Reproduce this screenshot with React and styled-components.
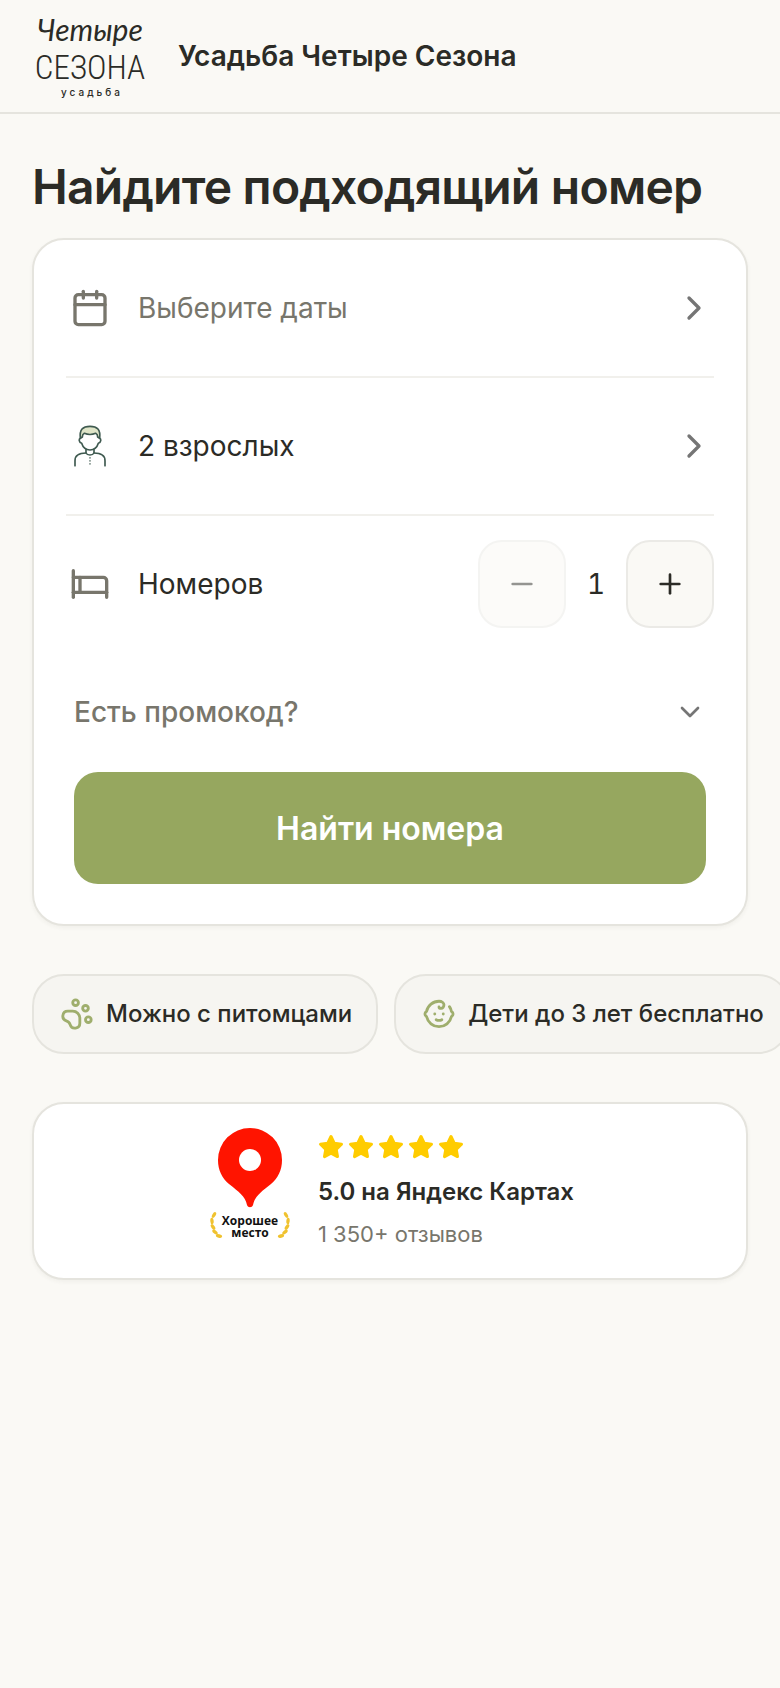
import { useState } from "react";
import styled, { createGlobalStyle } from "styled-components";
import {
  Baby,
  Bed,
  Calendar,
  ChevronDown,
  ChevronRight,
  Minus,
  PawPrint,
  Plus,
} from "lucide-react";

const GlobalStyle = createGlobalStyle`
  * {
    box-sizing: border-box;
  }
  body {
    margin: 0;
    background-color: #faf9f5;
    color: #2b2b26;
    font-family: Inter, "Liberation Sans", sans-serif;
    overflow-x: hidden;
  }
  button {
    font-family: inherit;
    color: inherit;
    cursor: pointer;
  }
`;

const Header = styled.header`
  display: flex;
  align-items: center;
  gap: 32px;
  height: 114px;
  padding: 0 32px;
  border-bottom: 2px solid #e5e4de;
`;
const LogoLink = styled.a`
  display: flex;
`;
const HotelName = styled.span`
  font-size: 28px;
  line-height: 40px;
  font-weight: 600;
`;

const Main = styled.main`
  display: flex;
  flex-direction: column;
  padding: 44px 32px;
`;
const Title = styled.h1`
  margin: 0 0 22px;
  font-size: 48px;
  line-height: 58px;
  font-weight: 600;
  letter-spacing: -0.016em;
`;

const Card = styled.section`
  background-color: white;
  border: 2px solid #e5e4de;
  border-radius: 32px;
  box-shadow: 0 2px 4px rgba(60, 60, 40, 0.05);
`;
const SearchForm = styled.form`
  padding: 0 32px 40px;
`;
const Row = styled.div`
  display: flex;
  align-items: center;
  gap: 24px;
  height: 136px;
`;
const RowButton = styled.button`
  display: flex;
  align-items: center;
  gap: 24px;
  width: 100%;
  height: 138px;
  padding: 0;
  background: none;
  border: none;
  border-bottom: 2px solid #f1f0ec;
  text-align: left;
`;
const RowIcon = styled.span`
  display: flex;
  justify-content: center;
  width: 48px;
  color: #78766c;
`;
const RowLabel = styled.span`
  flex: 1;
  font-size: 28px;
  line-height: 40px;
  color: ${(props) => (props.$muted ? "#78766c" : "#2b2b26")};
`;

const Stepper = styled.div`
  display: flex;
  align-items: center;
`;
const StepButton = styled.button`
  display: flex;
  align-items: center;
  justify-content: center;
  width: 88px;
  height: 88px;
  padding: 0;
  background-color: #faf9f5;
  border: 2px solid #ebeae6;
  border-radius: 24px;
  &:disabled {
    opacity: 0.5;
    cursor: default;
  }
`;
const Count = styled.output`
  width: 60px;
  font-size: 28px;
  line-height: 40px;
  text-align: center;
  font-variant-numeric: tabular-nums;
`;

const PromoButton = styled.button`
  display: flex;
  align-items: center;
  justify-content: space-between;
  width: 100%;
  height: 120px;
  padding: 0 8px;
  background: none;
  border: none;
  color: #78766c;
  font-size: 28px;
  line-height: 40px;
  font-weight: 500;
`;
const SubmitWrap = styled.div`
  display: flex;
  padding: 0 8px;
`;
const SubmitButton = styled.button`
  flex: 1;
  height: 112px;
  padding: 2px 0 0;
  background-color: #96a75f;
  border: none;
  border-radius: 24px;
  color: white;
  font-size: 32px;
  line-height: 40px;
  font-weight: 600;
`;

const Chips = styled.ul`
  display: flex;
  gap: 16px;
  margin: 48px -32px;
  padding: 0 32px;
  list-style: none;
  overflow-x: auto;
  scrollbar-width: none;
`;
const Chip = styled.li`
  display: flex;
  flex-shrink: 0;
  align-items: center;
  gap: 12px;
  height: 80px;
  padding: 0 24px 0 26px;
  background-color: #f6f5f1;
  border: 2px solid #e5e4de;
  border-radius: 32px;
  font-size: 24px;
  line-height: 32px;
  font-weight: 500;
  white-space: nowrap;
  svg {
    color: #9fae6d;
  }
`;

const RatingCard = styled(Card)`
  display: flex;
  align-items: center;
  justify-content: center;
  gap: 28px;
  padding: 24px 32px 24px 36px;
`;
const RatingInfo = styled.div`
  display: flex;
  flex-direction: column;
  gap: 12px;
`;
const Stars = styled.div`
  display: flex;
  gap: 4px;
  margin-bottom: 4px;
`;
const Score = styled.strong`
  font-size: 24px;
  line-height: 32px;
  font-weight: 600;
`;
const Reviews = styled.span`
  font-size: 22px;
  line-height: 28px;
  color: #78766c;
`;

const chips = [
  { id: 1, icon: PawPrint, text: "Можно с питомцами" },
  { id: 2, icon: Baby, text: "Дети до 3 лет бесплатно" },
];

// x, y, rotation of the left branch, the right one is mirrored
const leaves = [
  [4, 87, 30],
  [2, 93, -5],
  [3, 99, -35],
  [5, 104, -50],
  [9, 108, -75],
];

function Logo() {
  return (
    <svg width="114" height="96" viewBox="0 0 114 96" fill="#2b2b26">
      <text
        x="58"
        y="33"
        fontFamily="Lato, Inter, sans-serif"
        fontStyle="italic"
        fontWeight="400"
        fontSize="30"
        textAnchor="middle"
      >
        Четыре
      </text>
      <text
        x="58"
        y="71"
        fontFamily="'Roboto Condensed', 'Open Sans Condensed', 'Liberation Sans Narrow', Roboto, sans-serif"
        fontWeight="300"
        fontSize="33"
        textAnchor="middle"
      >
        СЕЗОНА
      </text>
      <text
        x="60"
        y="88"
        fontFamily="Inter, sans-serif"
        fontWeight="500"
        fontSize="10"
        letterSpacing="3"
        textAnchor="middle"
      >
        усадьба
      </text>
    </svg>
  );
}

function Person() {
  return (
    <svg
      width="48"
      height="54"
      viewBox="0 0 144 162"
      fill="none"
      stroke="#3f5a50"
      strokeWidth="5"
      strokeLinecap="round"
      strokeLinejoin="round"
    >
      <path
        d="M43 58C40 32 50 22 72 22s32 10 29 36l-6-4c0-6-2-9-6-11-10 4-24 4-34 0-4 2-6 5-6 11z"
        fill="#dfe5c8"
      />
      <path d="M43 58c-5 2-5 12 4 15 4 13 13 20 25 20s21-7 25-20c9-3 9-13 4-15" />
      <path d="M60 92v10c4 8 20 8 24 0V92" />
      <path d="M27 140v-15c0-16 12-23 33-23M117 140v-15c0-16-12-23-33-23" />
      <path d="M72 116v20" strokeWidth="4" strokeDasharray="1 8" />
    </svg>
  );
}

function Star() {
  return (
    <svg width="26" height="26" viewBox="0 0 26 26">
      <path
        d="M13 2.500l3.200 6.700 7.300 1-5.300 5.100 1.300 7.300L13 19.100l-6.500 3.500 1.300-7.300-5.300-5.100 7.300-1z"
        fill="#ffcc00"
        stroke="#ffcc00"
        strokeWidth="3"
        strokeLinejoin="round"
      />
    </svg>
  );
}

function Branch() {
  return leaves.map(([x, y, angle]) => (
    <ellipse
      key={y}
      cx={x}
      cy={y}
      rx="1.700"
      ry="3.200"
      transform={`rotate(${angle} ${x} ${y})`}
    />
  ));
}

function GoodPlace() {
  return (
    <svg width="80" height="126" viewBox="0 0 80 126">
      <path
        d="M40 0a32 32 0 0 1 32 32c0 10-4 18-11 24-10 8-16 12-18 21-1 3-5 3-6 0-2-9-8-13-18-21C12 50 8 42 8 32A32 32 0 0 1 40 0z"
        fill="#ff1400"
      />
      <circle cx="40" cy="32" r="11" fill="white" />
      <g fill="#f0c22f">
        <Branch />
        <g transform="matrix(-1 0 0 1 80 0)">
          <Branch />
        </g>
      </g>
      <g
        fontFamily="'Open Sans', 'Noto Sans', sans-serif"
        fontWeight="700"
        fontSize="12"
        textAnchor="middle"
        fill="#111111"
      >
        <text x="40" y="97">
          Хорошее
        </text>
        <text x="40" y="109">
          место
        </text>
      </g>
    </svg>
  );
}

export default function App() {
  const [rooms, setRooms] = useState(1);

  return (
    <>
      <GlobalStyle />
      <Header>
        <LogoLink href="#" aria-label="Усадьба Четыре Сезона">
          <Logo />
        </LogoLink>
        <HotelName>Усадьба Четыре Сезона</HotelName>
      </Header>
      <Main>
        <Title>Найдите подходящий номер</Title>
        <Card>
          <SearchForm onSubmit={(e) => e.preventDefault()}>
            <RowButton type="button">
              <RowIcon>
                <Calendar size={40} />
              </RowIcon>
              <RowLabel $muted>Выберите даты</RowLabel>
              <ChevronRight size={40} color="#757575" />
            </RowButton>
            <RowButton type="button">
              <RowIcon>
                <Person />
              </RowIcon>
              <RowLabel>2 взрослых</RowLabel>
              <ChevronRight size={40} color="#757575" />
            </RowButton>
            <Row>
              <RowIcon>
                <Bed size={40} />
              </RowIcon>
              <RowLabel>Номеров</RowLabel>
              <Stepper>
                <StepButton
                  type="button"
                  aria-label="Меньше"
                  disabled={rooms === 1}
                  onClick={() => setRooms((prev) => prev - 1)}
                >
                  <Minus size={32} />
                </StepButton>
                <Count>{rooms}</Count>
                <StepButton
                  type="button"
                  aria-label="Больше"
                  onClick={() => setRooms((prev) => prev + 1)}
                >
                  <Plus size={32} />
                </StepButton>
              </Stepper>
            </Row>
            <PromoButton type="button">
              Есть промокод?
              <ChevronDown size={32} color="#757575" />
            </PromoButton>
            <SubmitWrap>
              <SubmitButton type="submit">Найти номера</SubmitButton>
            </SubmitWrap>
          </SearchForm>
        </Card>
        <Chips>
          {chips.map(({ id, icon: Icon, text }) => (
            <Chip key={id}>
              <Icon size={34} />
              {text}
            </Chip>
          ))}
        </Chips>
        <RatingCard>
          <GoodPlace />
          <RatingInfo>
            <Stars>
              {[1, 2, 3, 4, 5].map((n) => (
                <Star key={n} />
              ))}
            </Stars>
            <Score>5.0 на Яндекс Картах</Score>
            <Reviews>1 350+ отзывов</Reviews>
          </RatingInfo>
        </RatingCard>
      </Main>
    </>
  );
}
